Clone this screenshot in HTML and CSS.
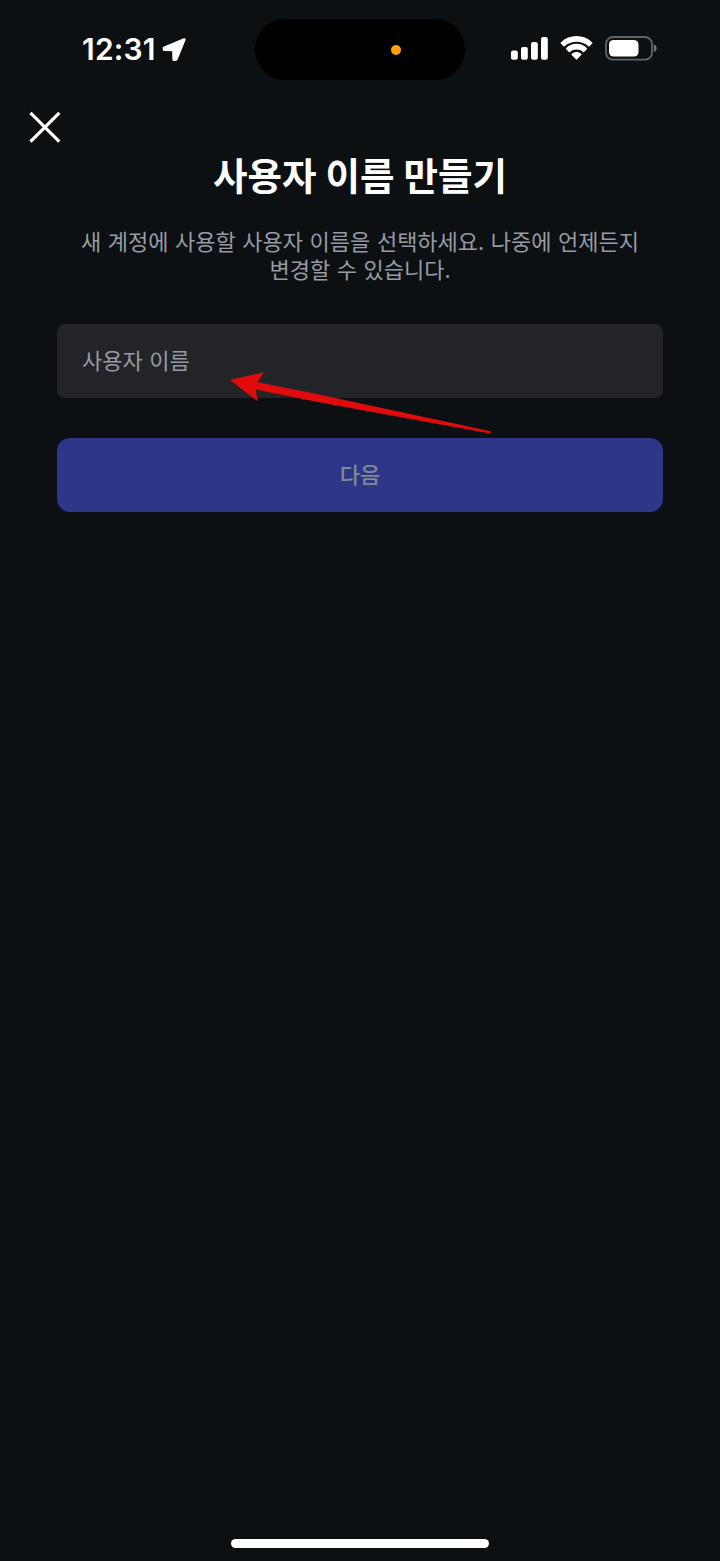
FILE: index.html
```html
<!DOCTYPE html>
<html lang="ko">
<head>
<meta charset="utf-8">
<title>사용자 이름 만들기</title>
<link rel="stylesheet" href="styles.css">
</head>
<body>
<div class="screen">
  <header class="status">
    <div class="status-left">
      <span class="clock">12:31</span>
      <svg class="location" width="24" height="24" viewBox="0 0 24 24"><path d="M22.2 1.6 2 10 2.2 11.6 11.5 11.9 11.8 21.6 14.2 21.3Z"/></svg>
    </div>
    <div class="island"><span class="mic-dot"></span></div>
    <div class="status-right">
      <svg width="38" height="24" viewBox="0 0 38 24"><rect x="0" y="14.6" width="6.8" height="9.1" rx="2"/><rect x="10" y="11" width="6.8" height="12.7" rx="2"/><rect x="20" y="6" width="6.8" height="17.7" rx="2"/><rect x="30" y=".9" width="6.8" height="22.8" rx="2"/></svg>
      <svg class="wifi" width="34" height="24" viewBox="0 0 34 24"><path d="M.8 7.6Q.2 7 .8 6.4C9.3-2.1 23.7-2.1 32.2 6.4Q32.8 7 32.2 7.6L29.5 10.3Q29 10.8 28.4 10.3C22.2 4.2 10.8 4.2 4.6 10.3Q4 10.8 3.5 10.3Z"/><path d="M6.2 13.2Q5.6 12.6 6.2 12C12.1 6.4 20.9 6.4 26.8 12Q27.4 12.6 26.8 13.2L24.1 15.9Q23.5 16.5 22.9 15.9C19.5 12.8 13.5 12.8 10.1 15.9Q9.5 16.5 8.9 15.9Z"/><path d="M11.7 18.9Q11.1 18.2 11.8 17.7C14.7 15.3 18.3 15.3 21.2 17.7Q21.9 18.2 21.3 18.9L17.1 23.2Q16.5 23.8 15.9 23.2Z"/></svg>
      <svg class="battery" width="53" height="25" viewBox="0 0 53 25"><rect class="battery-shell" x="1" y="1" width="46" height="22.6" rx="7"/><rect x="4" y="4" width="29.5" height="16.6" rx="4.6"/><path class="battery-cap" d="M48.8 8.6Q51.6 9.4 51.6 12.3 51.6 15.2 48.8 16Z"/></svg>
    </div>
  </header>
  <nav class="nav">
    <button class="close" aria-label="닫기"><svg width="32" height="32" viewBox="0 0 32 32"><path d="M1.5 1.8 30.3 30.6M30.3 1.8 1.5 30.6"/></svg></button>
  </nav>
  <main class="content">
    <h1 class="title">사용자 이름 만들기</h1>
    <p class="description">새 계정에 사용할 사용자 이름을 선택하세요. 나중에 언제든지<br>변경할 수 있습니다.</p>
    <div class="form">
      <input class="field" type="text" placeholder="사용자 이름" aria-label="사용자 이름">
      <svg class="arrow" width="264" height="64" viewBox="0 0 264 64"><path d="M1 10 34.8 2.3 28.8 12.2 90 24.6 261.7 61.3 261.2 63.5 90 32.2 26.8 19.4 28.7 31.2Z"/></svg>
      <button class="next">다음</button>
    </div>
  </main>
  <div class="home-indicator"></div>
</div>
</body>
</html>
```
FILE: styles.css
```css
* {
  box-sizing: border-box;
}

body {
  margin: 0;
  background: #0c1013;
  color: #fff;
  font-family: Inter, "Noto Sans CJK KR", sans-serif;
}

.screen {
  display: flex;
  flex-direction: column;
  align-items: center;
  height: 1561px;
  padding: 19px 0 13px;
}

svg {
  display: block;
  fill: #fff;
}

.status {
  display: grid;
  grid-template-columns: 255px 210px 255px;
  height: 61px;
  width: 100%;
}

.status-left {
  display: flex;
  align-items: center;
  gap: 7px;
  padding-left: 82px;
}

.clock {
  width: 73px;
  padding-bottom: 1px;
  font-size: 30px;
  font-weight: 600;
  line-height: 59px;
  letter-spacing: 0.2px;
  white-space: nowrap;
}

.location path {
  stroke: #fff;
  stroke-width: 2.8;
  stroke-linejoin: round;
}

.island {
  display: flex;
  align-items: center;
  padding: 1px 0 0 136px;
  border-radius: 31px;
  background: #000;
}

.mic-dot {
  width: 10px;
  height: 10px;
  border-radius: 50%;
  background: #ff9f0a;
}

.status-right {
  display: flex;
  align-items: flex-start;
  padding: 17px 0 0 46px;
}

.wifi {
  margin-left: 11px;
}

.battery {
  margin-left: 11px;
}

.battery-shell {
  fill: none;
  stroke: #626567;
  stroke-width: 1.8;
}

.battery-cap {
  fill: #717476;
}

.nav {
  width: 100%;
  height: 64px;
  padding: 31px 29px 0;
}

.close {
  display: block;
  padding: 0;
  border: 0;
  background: none;
}

.close path {
  stroke: #fff;
  stroke-width: 3.2;
}

.content {
  display: flex;
  flex-direction: column;
  width: 606px;
}

.title,
.description,
.field,
.next {
  font-family: "Noto Sans CJK KR", sans-serif;
}

.title {
  margin: 2px 0 0;
  font-size: 37.5px;
  font-weight: 600;
  line-height: 56px;
  text-align: center;
  white-space: nowrap;
  word-spacing: -1.6px;
}

.description {
  margin: 24px 0 0;
  color: #979ba3;
  font-size: 22px;
  line-height: 28px;
  text-align: center;
  white-space: nowrap;
  word-spacing: 0.4px;
}

.form {
  position: relative;
  display: flex;
  flex-direction: column;
  gap: 40px;
  margin-top: 42px;
}

.field {
  width: 100%;
  height: 74px;
  padding: 0 25px 4px;
  border: 0;
  border-radius: 8px;
  background: #232428;
  color: #fff;
  font-size: 22px;
  word-spacing: 0.4px;
}

.field::placeholder {
  color: #979ba3;
  opacity: 1;
}

.arrow {
  position: absolute;
  top: 46px;
  left: 172px;
  fill: #e20b0b;
  pointer-events: none;
}

.next {
  height: 74px;
  padding: 0 0 4px;
  border: 0;
  border-radius: 13px;
  background: #2c3887;
  color: #858796;
  font-size: 22px;
  font-weight: 500;
}

.home-indicator {
  width: 258px;
  height: 9px;
  margin-top: auto;
  border-radius: 5px;
  background: #fff;
}
```
